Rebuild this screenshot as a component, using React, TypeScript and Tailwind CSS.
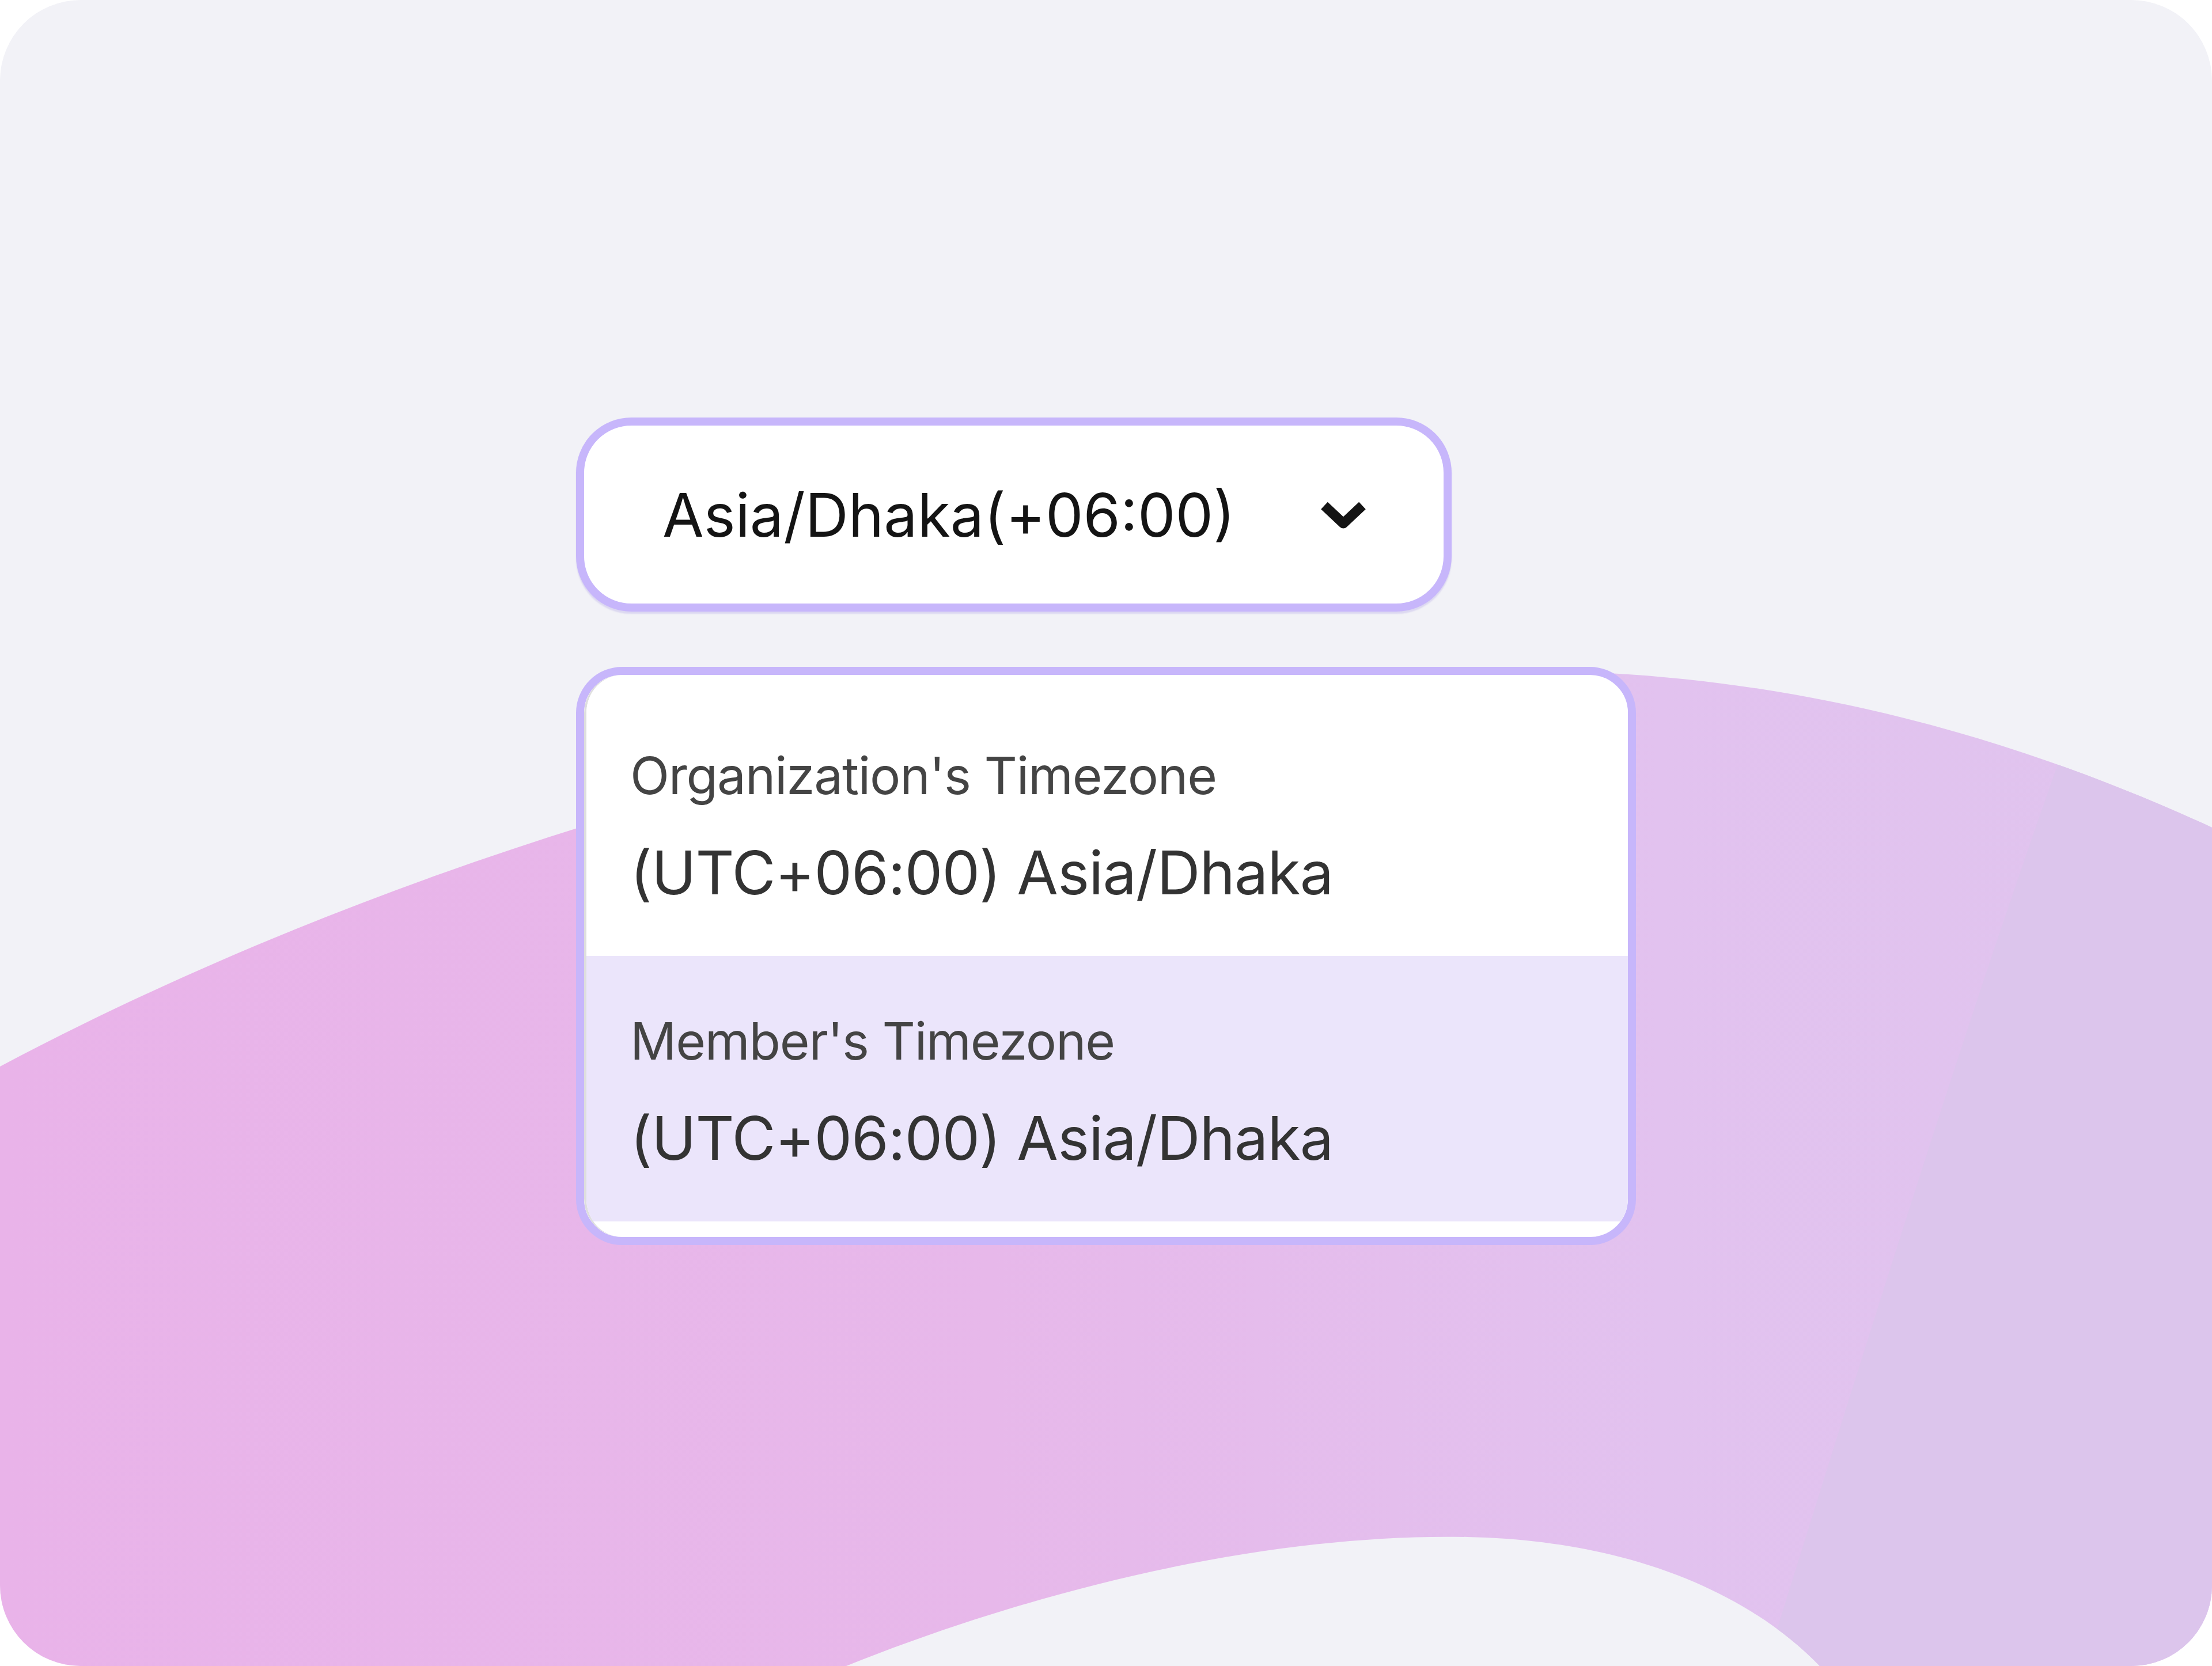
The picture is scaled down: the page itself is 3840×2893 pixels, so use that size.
import React from 'react';

const font = { fontFamily: 'Inter, "Noto Sans", sans-serif' };

const options = [
  { label: "Organization's Timezone", value: '(UTC+06:00) Asia/Dhaka', active: false },
  { label: "Member's Timezone", value: '(UTC+06:00) Asia/Dhaka', active: true },
];

function Backdrop() {
  const blob =
    'M0 1852 C700 1480 1700 1170 2650 1165 C3100 1165 3500 1280 3840 1437 L3840 2893 L3159 2893 C3050 2780 2850 2675 2547 2669 C2200 2662 1800 2760 1469 2893 L0 2893 Z';
  return (
    <svg
      className="absolute inset-0 h-full w-full"
      viewBox="0 0 3840 2893"
      preserveAspectRatio="none"
    >
      <defs>
        <linearGradient id="blobFill" x1="0" y1="0" x2="1" y2="0">
          <stop offset="0" stopColor="#e9b3e9" />
          <stop offset="0.45" stopColor="#e7b8ea" />
          <stop offset="0.75" stopColor="#e2c2ef" />
          <stop offset="1" stopColor="#e0c4ee" />
        </linearGradient>
        <clipPath id="blobClip">
          <path d={blob} />
        </clipPath>
      </defs>
      <path d={blob} fill="url(#blobFill)" />
      <path
        d="M3065 2893 C3250 2300 3430 1720 3600 1250 L3840 1250 L3840 2893 Z"
        fill="#dcc5ec"
        clipPath="url(#blobClip)"
      />
    </svg>
  );
}

function Chevron() {
  return (
    <svg width="82" height="48" viewBox="0 0 82 48" fill="none">
      <polyline
        points="8,8 41,39 74,8"
        stroke="#141414"
        strokeWidth="17"
        strokeLinejoin="round"
        strokeLinecap="butt"
      />
    </svg>
  );
}

export default function App() {
  return (
    <div className="w-[3840px] h-[2893px] bg-white" style={font}>
      <div className="relative h-full w-full overflow-hidden rounded-[140px] bg-[#f2f2f7]">
        <Backdrop />
        <div className="relative flex flex-col items-start gap-[96px] pl-[1000px] pt-[725px]">
          <div className="flex h-[337px] w-[1520px] items-center justify-between rounded-[96px] border-[14px] border-[#c7b6fb] bg-white pl-[136px] pr-[133px] shadow-[0_4px_2px_rgba(180,170,230,0.35)]">
            <span className="text-[104px] leading-none text-[#141414]">Asia/Dhaka(+06:00)</span>
            <Chevron />
          </div>

          <div className="w-[1840px] overflow-hidden rounded-[80px] border-[14px] border-[#c7b6fb] bg-white">
            <div className="overflow-hidden rounded-[66px] border-l-[4px] border-[#dedede] py-[27px]">
              {options.map((o) => (
                <div
                  key={o.label}
                  className={
                    'flex flex-col gap-[72px] pb-[93px] pl-[76px] pt-[103px] ' +
                    (o.active ? 'bg-[#ebe5fb]' : 'bg-white')
                  }
                >
                  <span className="text-[89px] leading-none tracking-[-0.014em] text-[#444444]">
                    {o.label}
                  </span>
                  <span className="text-[104px] leading-none tracking-[-0.009em] text-[#333333]">
                    {o.value}
                  </span>
                </div>
              ))}
            </div>
          </div>
        </div>
      </div>
    </div>
  );
}
